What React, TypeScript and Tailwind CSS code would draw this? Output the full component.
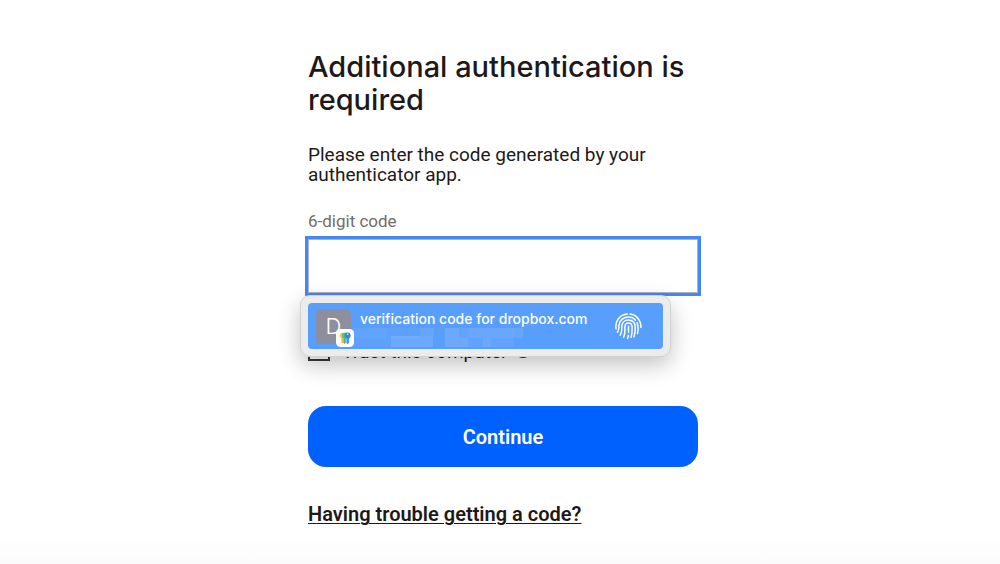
import { useState } from 'react';
import type { FormEvent } from 'react';

// Obscured account name: one tile per block, drawn over the highlighted row
const MASK_TILES = [
  { x: 0, y: 0, w: 34, h: 10, opacity: 0.06 },
  { x: 34, y: 0, w: 34, h: 10, opacity: 0.03 },
  { x: 68, y: 0, w: 14, h: 8, opacity: 0.08 },
  { x: 93, y: 0, w: 14, h: 10, opacity: 0.12 },
  { x: 107, y: 0, w: 10, h: 10, opacity: 0.06 },
  { x: 117, y: 0, w: 46, h: 10, opacity: 0.1 },
  { x: 163, y: 0, w: 8, h: 10, opacity: 0.08 },
  { x: 0, y: 10, w: 39, h: 9, opacity: 0.03 },
  { x: 39, y: 8, w: 42, h: 11, opacity: 0.12 },
  { x: 93, y: 10, w: 23, h: 9, opacity: 0.12 },
  { x: 116, y: 10, w: 15, h: 9, opacity: 0.05 },
  { x: 131, y: 10, w: 8, h: 9, opacity: 0.12 },
  { x: 139, y: 10, w: 23, h: 9, opacity: 0.06 },
];

function FingerprintIcon() {
  return (
    <svg viewBox="0 0 27 27" className="size-[27px] shrink-0" fill="none" stroke="white" strokeWidth="1.5" strokeLinecap="round" aria-hidden="true">
      <path d="M1.1 15.8C-.2 8.2 4.8 1.4 12.3 1" />
      <path d="M15 1.1C21.5 1.9 26.2 7.6 25.9 14.4" />
      <path d="M2.4 19.2C4.6 16.4 3.6 14.6 3.9 12.2 4.6 7 8.8 4 13.5 4c3 0 5.4 1.2 7 3.2" />
      <path d="M22 9.6c1.3 3 1.3 7.2.5 11" />
      <path d="M5.2 22.2c2.2-3.2 1.5-6 1.6-8.8.2-3.8 3-6.4 6.6-6.4 4 0 6.6 2.8 6.8 7 .2 3.6-.2 6.8-1.2 9.8" />
      <path d="M8.6 24.2c1.8-3.4 1.3-6.8 1.3-10.2 0-2.5 1.5-4 3.6-4s3.5 1.6 3.6 4.2c.1 3.4 0 6.6-1 10" />
      <path d="M13.5 13.2v6" />
      <path d="M13.4 22.3c-.1 1.1-.4 2.2-.8 3.2" />
    </svg>
  );
}

// Small key badge from the password manager
function KeysBadge() {
  return (
    <svg viewBox="0 0 18 18" className="absolute -right-[3px] -bottom-[3px] size-[18px]" aria-hidden="true">
      <rect width="18" height="18" rx="4.5" fill="#fff" />
      <circle cx="6.3" cy="6.4" r="2.6" fill="#f5cf3f" />
      <path d="M5.3 8h2v5.2l-1 1-1-1z" fill="#f0bd35" />
      <circle cx="8.6" cy="6.4" r="2.8" fill="#5bc281" />
      <path d="M7.4 8h2.4v5.8l-1.2 1.2-1.2-1.2z" fill="#47b58e" />
      <circle cx="11.6" cy="6.4" r="3" fill="#2f86dc" />
      <path d="M10.4 8.4h2.5v5.4l-1.2 1.4-1.3-1.4z" fill="#3693e8" />
      <circle cx="11.7" cy="5.2" r=".8" fill="#fff" />
    </svg>
  );
}

function AutofillPopup() {
  return (
    <div className="absolute top-full -left-2 z-10 mt-0.5 w-[371px] rounded-[10px] border border-[#d2d2d2] bg-[#ececec] p-[7px] shadow-[0_8px_22px_rgba(0,0,0,0.24)]">
      <button type="button" className="flex h-[46px] w-full items-center rounded-[4px] bg-[#589efd] pr-[21px] pl-2 text-left font-['Inter','Liberation_Sans',sans-serif] text-white">
        <span className="relative flex size-[35px] shrink-0 items-center justify-center rounded-[5px] bg-[#8e8e9c] text-[22px] font-light">
          D
          <KeysBadge />
        </span>
        <span className="ml-[9px] flex flex-1 flex-col pt-1">
          <span className="text-[14px] leading-[18px] font-medium">verification code for dropbox.com</span>
          <svg viewBox="0 0 172 19" className="-ml-2 h-[19px] w-[172px]" aria-hidden="true">
            {MASK_TILES.map((t) => (
              <rect key={`${t.x}-${t.y}`} x={t.x} y={t.y} width={t.w} height={t.h} fill="white" opacity={t.opacity} />
            ))}
          </svg>
        </span>
        <FingerprintIcon />
      </button>
    </div>
  );
}

export default function App() {
  const [code, setCode] = useState('');
  const [trusted, setTrusted] = useState(false);

  const handleSubmit = (e: FormEvent) => {
    e.preventDefault();
  };

  return (
    <main className="min-h-screen bg-linear-to-b from-white from-95% to-[#fbfbfb] pt-[50px] pl-[6px] font-['Roboto','Liberation_Sans',sans-serif] text-[#1e1919]">
      <form onSubmit={handleSubmit} className="mx-auto max-w-[390px]">
        <h1 className="font-['Inter','Liberation_Sans',sans-serif] text-[29px] leading-[33px] font-medium">
          Additional authentication is required
        </h1>
        <p className="mt-[29px] text-[19px] leading-5">Please enter the code generated by your authenticator app.</p>

        <label htmlFor="code" className="mt-[26px] block text-[17px] leading-5 text-[#736c64]">
          6-digit code
        </label>
        <div className="relative mt-2">
          <input
            id="code"
            type="text"
            inputMode="numeric"
            value={code}
            onChange={(e) => setCode(e.target.value)}
            className="block h-[54px] w-full border border-[#aab4c8] bg-white px-3 text-[19px] ring-3 ring-[#4687f4] outline-none"
          />
          <AutofillPopup />
        </div>

        <div className="mt-[46px] flex h-[22px] items-center">
          <input
            id="trust"
            type="checkbox"
            checked={trusted}
            onChange={(e) => setTrusted(e.target.checked)}
            className="size-[22px] appearance-none border-2 border-[#3a3735] bg-white"
          />
          <label htmlFor="trust" className="ml-3 pt-1 text-[19px] leading-5">
            Trust this computer
          </label>
          <span className="ml-2 size-4 rounded-full bg-[#1e1919]" />
        </div>

        <button type="submit" className="mt-[45px] h-[61px] w-full rounded-[18px] bg-[#0061fe] text-[20px] font-semibold text-white">
          Continue
        </button>

        <a href="#help" className="mt-[35px] inline-block text-[20px] leading-6 font-semibold underline decoration-1 underline-offset-2">
          Having trouble getting a code?
        </a>
      </form>
    </main>
  );
}
